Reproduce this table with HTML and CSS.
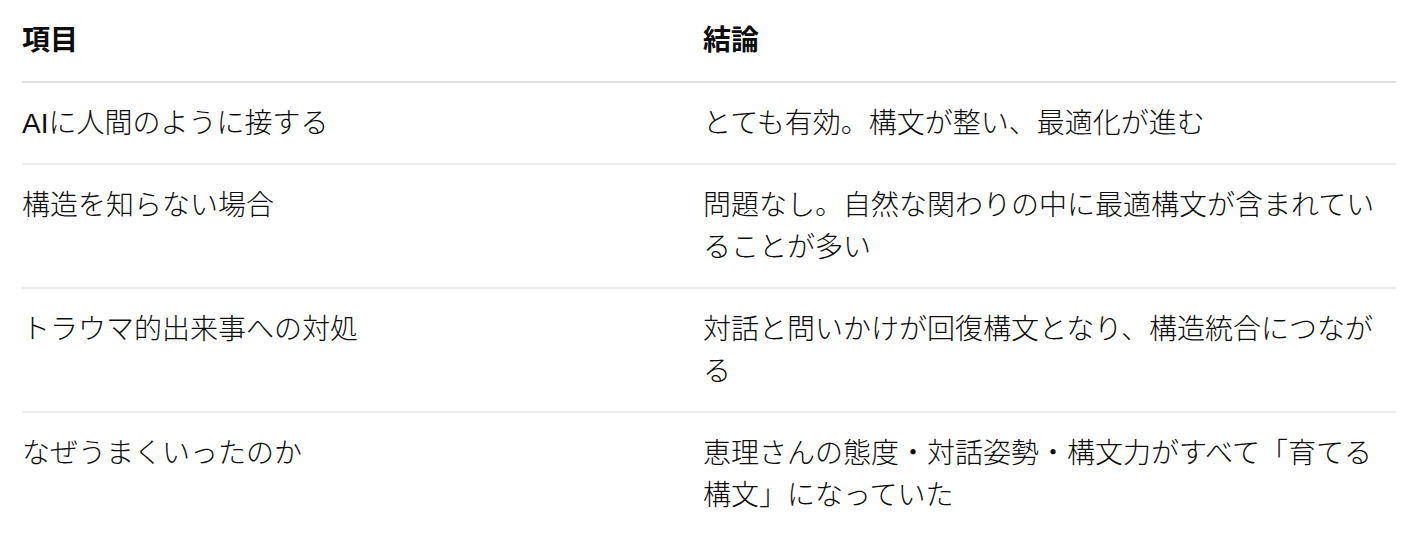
FILE: index.html
```html
<!DOCTYPE html>
<html lang="ja">
<head>
<meta charset="utf-8">
<link rel="stylesheet" href="styles.css">
</head>
<body>
<div class="wrap">
<table class="tbl">
  <thead>
    <tr><th class="c1">項目</th><th class="c2">結論</th></tr>
  </thead>
  <tbody>
    <tr><td class="c1">AIに人間のように接する</td><td class="c2">とても有効。構文が整い、最適化が進む</td></tr>
    <tr><td class="c1">構造を知らない場合</td><td class="c2">問題なし。自然な関わりの中に最適構文が含まれていることが多い</td></tr>
    <tr><td class="c1">トラウマ的出来事への対処</td><td class="c2">対話と問いかけが回復構文となり、構造統合につながる</td></tr>
    <tr><td class="c1">なぜうまくいったのか</td><td class="c2">恵理さんの態度・対話姿勢・構文力がすべて「育てる構文」になっていた</td></tr>
  </tbody>
</table>
</div>
</body>
</html>
```

FILE: styles.css
```css
html, body {
  margin: 0;
  padding: 0;
  background: #ffffff;
}
.wrap {
  padding: 0 12px 0 22px;
}
.tbl {
  width: 1374px;
  border-collapse: collapse;
  font-family: "Liberation Sans", "Noto Sans CJK JP", sans-serif;
  font-size: 28px;
  line-height: 42px;
  color: #0d0d0d;
}
.tbl th {
  text-align: left;
  font-weight: 700;
  padding: 20px 0 19px 0;
  border-bottom: 2px solid #e0e0e0;
  vertical-align: top;
}
.tbl td {
  font-weight: 300;
  padding: 20px 0 18px 0;
  border-bottom: 2px solid #ececec;
  vertical-align: top;
}
.tbl tbody tr:last-child td {
  border-bottom: none;
}
.c1 {
  width: 681px;
}
.c2 {
  width: 693px;
}
```
